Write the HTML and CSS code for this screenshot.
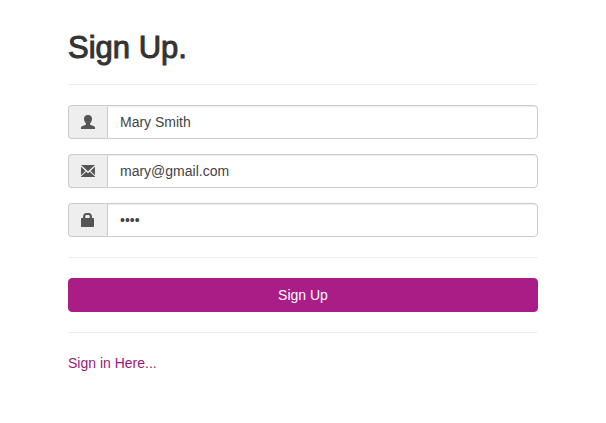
FILE: index.html
```html
<!DOCTYPE html>
<html lang="en">
<head>
<meta charset="utf-8">
<meta name="viewport" content="width=device-width, initial-scale=1">
<title>Sign Up</title>
<link rel="stylesheet" href="styles.css">
</head>
<body>
<main class="container">
  <form class="signup">
    <h2 class="title">Sign Up.</h2>
    <hr class="rule">
    <div class="fields">
      <div class="input-group">
        <label class="addon" for="name" aria-label="Name">
          <svg class="icon" viewBox="0 0 14 14" aria-hidden="true"><path d="M7 0C4.300 0 3 1.300 3 3.800C3 5.900 3.900 7.400 5 8.300V9.200C5 9.700 4.700 9.900 4.200 10.100L1 11.200C.3 11.500 0 12 0 12.700V14H14V12.700C14 12 13.700 11.500 13 11.200L9.800 10.100C9.300 9.900 9 9.700 9 9.200V8.300C10.100 7.400 11 5.900 11 3.800C11 1.300 9.700 0 7 0Z"/></svg>
        </label>
        <input class="control" id="name" type="text" value="Mary Smith">
      </div>
      <div class="input-group">
        <label class="addon" for="email" aria-label="Email">
          <svg class="icon" viewBox="0 0 14 14" aria-hidden="true"><path d="M0 1H14L7 7.300ZM0 2.700L4.500 7L0 11.200ZM14 2.700V11.200L9.500 7ZM5.300 7.700L7 9.200L8.700 7.700L14 12.500V13H0V12.500Z"/></svg>
        </label>
        <input class="control" id="email" type="email" value="mary@gmail.com">
      </div>
      <div class="input-group">
        <label class="addon" for="password" aria-label="Password">
          <svg class="icon" viewBox="0 0 14 14" aria-hidden="true"><path fill-rule="evenodd" d="M2 5V4C2 1.500 3.500 0 5.500 0H7.500C9.500 0 11 1.500 11 4V5H12C12.700 5 13 5.400 13 6V13C13 13.700 12.700 14 12 14H1C.3 14 0 13.700 0 13V6C0 5.400.3 5 1 5ZM4.300 5H8.700V3.500C8.700 2.400 8.200 2 7.500 2H5.500C4.800 2 4.300 2.400 4.300 3.500Z"/></svg>
        </label>
        <input class="control password" id="password" type="password" value="1234">
      </div>
    </div>
    <hr class="rule">
    <button class="submit" type="button">Sign Up</button>
    <hr class="rule">
    <a class="signin" href="#">Sign in Here...</a>
  </form>
</main>
</body>
</html>
```
FILE: styles.css
```css
* {
  box-sizing: border-box;
}

body {
  margin: 0;
  background: #fff;
  color: #333;
  font: 14px/20px "Liberation Sans", Arial, sans-serif;
}

.container {
  max-width: 500px;
  margin: 0 auto;
  padding: 31px 15px;
}

.title {
  margin: 0;
  font-size: 31px;
  font-weight: normal;
  line-height: 33px;
  -webkit-text-stroke: 1px #333;
}

.rule {
  height: 1px;
  margin: 20px 0;
  border: 0;
  background: #eee;
}

.fields {
  display: grid;
  gap: 15px;
}

.input-group {
  display: flex;
  height: 34px;
}

.addon {
  display: flex;
  align-items: center;
  padding: 0 12px;
  border: 1px solid #ccc;
  border-right: 0;
  border-radius: 4px 0 0 4px;
  background: #eee;
}

.icon {
  width: 14px;
  height: 14px;
  fill: #555;
}

.control {
  flex: 1;
  min-width: 0;
  padding: 6px 12px;
  border: 1px solid #ccc;
  border-radius: 0 4px 4px 0;
  background: #fff;
  box-shadow: inset 0 1px 1px rgba(0, 0, 0, 0.075);
  color: #444;
  font: inherit;
  outline: 0;
}

.submit {
  display: block;
  width: 100%;
  padding: 6px 12px;
  border: 1px solid #aa1c86;
  border-radius: 4px;
  background: #aa1c86;
  color: #fff;
  font: inherit;
}

.signin {
  color: #991878;
  text-decoration: none;
}
```
